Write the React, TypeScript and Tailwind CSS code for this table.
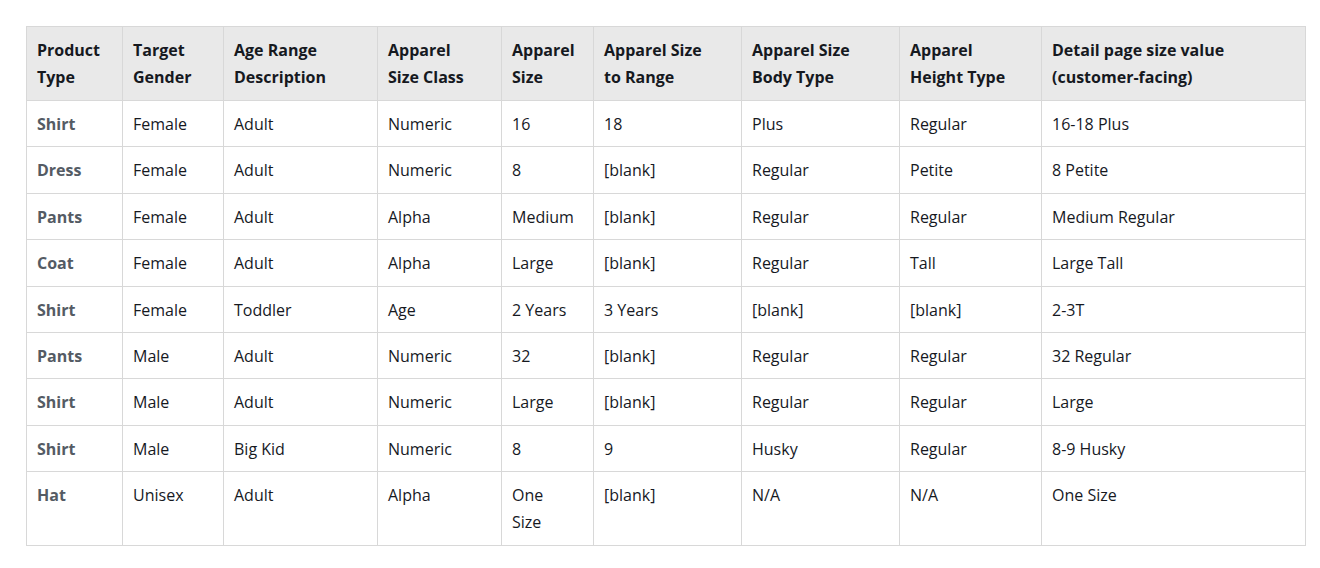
const headers = [
  ["Product", "Type"],
  ["Target", "Gender"],
  ["Age Range", "Description"],
  ["Apparel", "Size Class"],
  ["Apparel", "Size"],
  ["Apparel Size", "to Range"],
  ["Apparel Size", "Body Type"],
  ["Apparel", "Height Type"],
  ["Detail page size value", "(customer-facing)"],
];

const widths = ["w-[96px]", "w-[101px]", "w-[154px]", "w-[124px]", "w-[92px]", "w-[148px]", "w-[158px]", "w-[142px]", "w-[264px]"];

const rows: string[][] = [
  ["Shirt", "Female", "Adult", "Numeric", "16", "18", "Plus", "Regular", "16-18 Plus"],
  ["Dress", "Female", "Adult", "Numeric", "8", "[blank]", "Regular", "Petite", "8 Petite"],
  ["Pants", "Female", "Adult", "Alpha", "Medium", "[blank]", "Regular", "Regular", "Medium Regular"],
  ["Coat", "Female", "Adult", "Alpha", "Large", "[blank]", "Regular", "Tall", "Large Tall"],
  ["Shirt", "Female", "Toddler", "Age", "2 Years", "3 Years", "[blank]", "[blank]", "2-3T"],
  ["Pants", "Male", "Adult", "Numeric", "32", "[blank]", "Regular", "Regular", "32 Regular"],
  ["Shirt", "Male", "Adult", "Numeric", "Large", "[blank]", "Regular", "Regular", "Large"],
  ["Shirt", "Male", "Big Kid", "Numeric", "8", "9", "Husky", "Regular", "8-9 Husky"],
  ["Hat", "Unisex", "Adult", "Alpha", "One Size", "[blank]", "N/A", "N/A", "One Size"],
];

export default function App() {
  return (
    <div className="min-h-[568px] bg-white pl-[26px] pt-[26px] font-['Open_Sans',sans-serif] text-[16px] leading-[27px] text-[#16191f]">
      <table className="table-fixed border-collapse border border-[#d8d8d8] w-[1279px]">
        <thead>
          <tr className="bg-[#e9e9e9]">
            {headers.map((h, i) => (
              <th key={i} className={`${widths[i]} border border-[#d8d8d8] px-[10px] pt-[10px] pb-[9px] text-left align-top font-bold`}>
                {h[0]}
                <br />
                {h[1]}
              </th>
            ))}
          </tr>
        </thead>
        <tbody>
          {rows.map((r, ri) => (
            <tr key={ri}>
              {r.map((c, ci) => (
                <td
                  key={ci}
                  className={
                    ci === 0
                      ? "border border-[#d8d8d8] px-[10px] pt-[10px] pb-[8.4px] align-top font-bold text-[#545b64]"
                      : "border border-[#d8d8d8] px-[10px] pt-[10px] pb-[8.4px] align-top"
                  }
                >
                  {c === "One Size" && ci === 4 ? (
                    <>
                      One
                      <br />
                      Size
                    </>
                  ) : (
                    c
                  )}
                </td>
              ))}
            </tr>
          ))}
        </tbody>
      </table>
    </div>
  );
}
